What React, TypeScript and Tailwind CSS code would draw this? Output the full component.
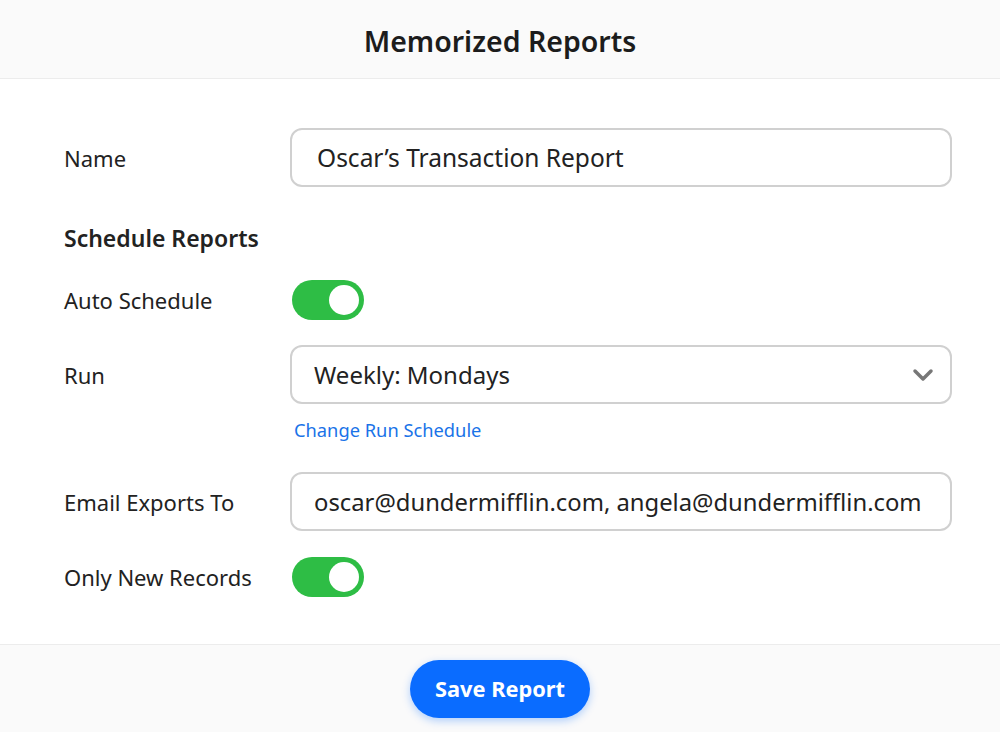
import React, { useState } from 'react';

function Toggle({ on, onChange }: { on: boolean; onChange: () => void }) {
  return (
    <button
      type="button"
      onClick={onChange}
      className={`ml-[2px] flex h-[40px] w-[72px] items-center rounded-full px-[5px] ${on ? 'justify-end bg-[#2ebd45]' : 'justify-start bg-gray-300'}`}
    >
      <span className="block h-[30px] w-[30px] rounded-full bg-white" />
    </button>
  );
}

function Row({ label, children, className = '' }: { label: string; children: React.ReactNode; className?: string }) {
  return (
    <div className={`flex items-center ${className}`}>
      <div className="w-[226px] shrink-0 text-[22px] leading-[28px] text-[#222]">{label}</div>
      <div className="flex-1">{children}</div>
    </div>
  );
}

export default function App() {
  const [auto, setAuto] = useState(true);
  const [onlyNew, setOnlyNew] = useState(true);

  return (
    <div className="flex h-[732px] w-[1000px] flex-col bg-white" style={{ fontFamily: '"Noto Sans", Lato, sans-serif' }}>
      {/* Header */}
      <div className="flex h-[79px] shrink-0 items-center justify-center border-b border-[#ececec] bg-[#fafafa] pt-[4px]">
        <h1 className="text-[28.5px] font-semibold text-[#1c1c1c]">Memorized Reports</h1>
      </div>

      {/* Form */}
      <div className="flex-1 pl-[64px] pr-[48px] pt-[49px]">
        <Row label="Name">
          <div className="flex h-[59px] items-center rounded-[12px] border-2 border-[#d0d0d0] px-[25px] text-[24.5px] leading-[30px] text-[#222]">
            Oscar’s Transaction Report
          </div>
        </Row>

        <div className="mt-[36px] text-[23px] font-semibold leading-[30px] text-[#222]">Schedule Reports</div>

        <Row label="Auto Schedule" className="mt-[27px]">
          <Toggle on={auto} onChange={() => setAuto(!auto)} />
        </Row>

        <Row label="Run" className="mt-[25px]">
          <div className="flex h-[59px] items-center justify-between rounded-[12px] border-2 border-[#d0d0d0] pl-[22px] pr-[16px] text-[24px] leading-[30px] text-[#222]">
            <span>Weekly: Mondays</span>
            <svg width="22" height="14" viewBox="0 0 22 14" fill="none">
              <path d="M3 3l8 8 8-8" stroke="#777" strokeWidth="3.5" strokeLinecap="round" strokeLinejoin="round" />
            </svg>
          </div>
        </Row>
        <div className="ml-[230px] mt-[14px] text-[18.3px] leading-[24px] text-[#1a73e8]">Change Run Schedule</div>

        <Row label="Email Exports To" className="mt-[30px]">
          <div className="flex h-[59px] items-center rounded-[12px] border-2 border-[#d0d0d0] px-[22px] text-[23.8px] leading-[30px] text-[#222]">
            oscar@dundermifflin.com, angela@dundermifflin.com
          </div>
        </Row>

        <Row label="Only New Records" className="mt-[26px]">
          <Toggle on={onlyNew} onChange={() => setOnlyNew(!onlyNew)} />
        </Row>
      </div>

      {/* Footer */}
      <div className="flex h-[88px] shrink-0 items-start justify-center border-t border-[#ececec] bg-[#fafafa] pt-[15px]">
        <button
          type="button"
          className="h-[58px] w-[180px] rounded-full bg-[#0a6cff] text-[21.8px] font-bold text-white shadow-[0_3px_8px_rgba(10,108,255,0.3)]"
        >
          Save Report
        </button>
      </div>
    </div>
  );
}
